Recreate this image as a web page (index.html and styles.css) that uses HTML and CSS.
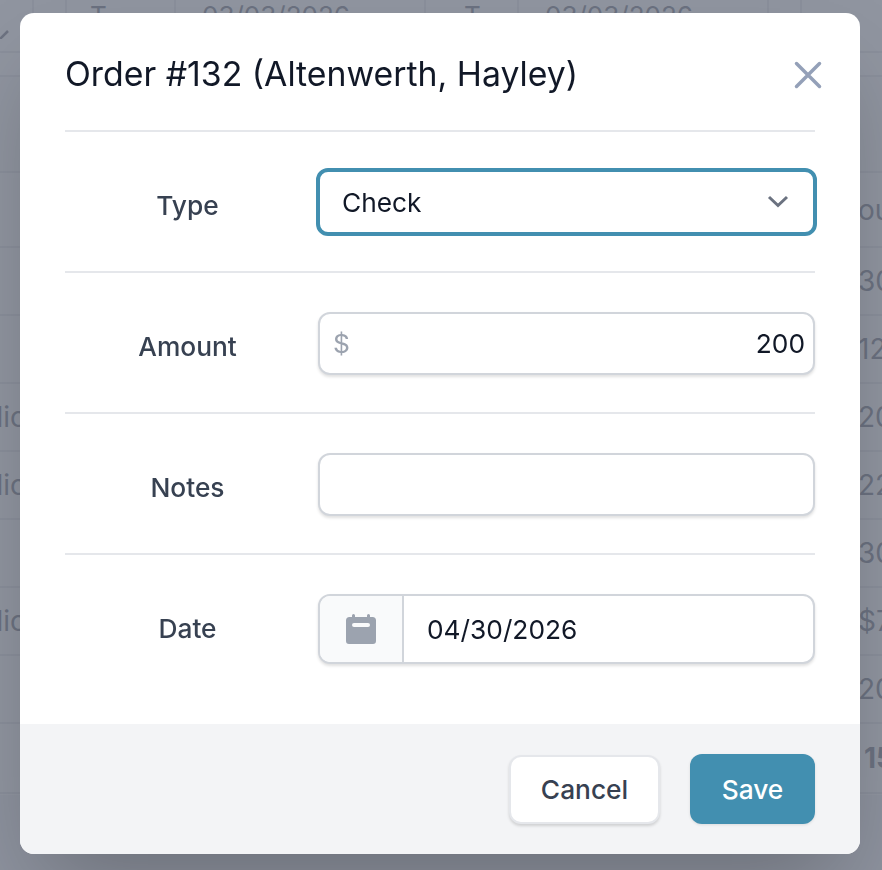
FILE: index.html
```html
<!DOCTYPE html>
<html lang="en">
<head>
  <meta charset="UTF-8" />
  <meta name="viewport" content="width=device-width, initial-scale=1.0" />
  <title>Order #132</title>
  <link rel="stylesheet" href="styles.css">
</head>
<body>
  <div class="page">
    <div class="filter-row">
      <span class="filter-cell filter-arrow">
        <svg width="12" height="12" viewBox="0 0 12 12"><path d="M0 12 L8 4" fill="none" stroke="#6f7280" stroke-width="2.5"/></svg>
      </span>
      <span class="filter-cell filter-gap"></span>
      <span class="filter-cell filter-type">T</span>
      <span class="filter-cell filter-date">03/03/2026</span>
      <span class="filter-cell filter-type-b">T</span>
      <span class="filter-cell filter-date">03/03/2026</span>
      <span class="filter-cell filter-gap"></span>
    </div>
    <div class="row row-gap"></div>
    <div class="row row-head"></div>
    <div class="row row-title"><span class="cell-left"></span><span class="cell-right">ou</span></div>
    <div class="row"><span class="cell-left"></span><span class="cell-right">30</span></div>
    <div class="row"><span class="cell-left"></span><span class="cell-right">12</span></div>
    <div class="row"><span class="cell-left">lic</span><span class="cell-right">20</span></div>
    <div class="row"><span class="cell-left">lic</span><span class="cell-right">22</span></div>
    <div class="row"><span class="cell-left"></span><span class="cell-right">30</span></div>
    <div class="row"><span class="cell-left">lic</span><span class="cell-right">$7</span></div>
    <div class="row"><span class="cell-left"></span><span class="cell-right">20</span></div>
    <div class="row row-total"><span class="cell-left"></span><span class="cell-right">15</span></div>
  </div>

  <div class="overlay"></div>

  <div class="modal">
    <div class="modal-header">
      <h1>Order #132 (Altenwerth, Hayley)</h1>
      <button class="close-btn" aria-label="Close">
        <svg width="28" height="28" viewBox="0 0 28 28"><path d="M2.5 2.500 L25.500 25.500 M25.500 2.500 L2.500 25.500" fill="none" stroke="currentColor" stroke-width="3.500" stroke-linecap="round"/></svg>
      </button>
    </div>

    <form class="modal-body">
      <div class="form-row">
        <label>Type</label>
        <div class="select-wrap">
          <select class="field-select">
            <option>Check</option>
          </select>
          <svg class="chevron" width="22" height="13" viewBox="0 0 22 13"><path d="M2 2 L11 10.500 L20 2" fill="none" stroke="currentColor" stroke-width="3"/></svg>
        </div>
      </div>
      <div class="form-row">
        <label>Amount</label>
        <div class="field">
          <span class="prefix">$</span>
          <input type="text" class="input-amount" value="200">
        </div>
      </div>
      <div class="form-row">
        <label>Notes</label>
        <div class="field">
          <input type="text">
        </div>
      </div>
      <div class="form-row">
        <label>Date</label>
        <div class="field field-date">
          <span class="addon">
            <svg width="32" height="32" viewBox="0 0 32 32"><path d="M7 2.500a1.500 1.500 0 0 1 3 0V4h12V2.500a1.500 1.500 0 0 1 3 0V4h2.500A3.500 3.500 0 0 1 31 7.500V28a3 3 0 0 1-3 3H4a3 3 0 0 1-3-3V7.500A3.500 3.500 0 0 1 4.500 4H7zM9 10a2 2 0 0 0 0 4h14a2 2 0 0 0 0-4z" fill="currentColor" fill-rule="evenodd"/></svg>
          </span>
          <input type="text" value="04/30/2026">
        </div>
      </div>
    </form>

    <div class="modal-footer">
      <button class="btn btn-cancel">Cancel</button>
      <button class="btn btn-save">Save</button>
    </div>
  </div>
</body>
</html>
```

FILE: styles.css
```css
* {
  box-sizing: border-box;
  margin: 0;
  padding: 0;
  font-family: Inter, 'Liberation Sans', sans-serif;
}

body {
  height: 870px;
  overflow: hidden;
  background: #f3f4f6;
}

.page {
  height: 795px;
  background: #fff;
  color: #6b7280;
  font-size: 28px;
}

.filter-row {
  display: flex;
  height: 53px;
  border-bottom: 2px solid #e5e7eb;
  background: #fff;
  font-size: 26px;
}

.filter-cell {
  border-right: 2px solid #e5e7eb;
  height: 100%;
}

.filter-arrow { width: 34px; padding-top: 14px; }
.filter-gap { width: 33px; }
.filter-type { width: 109px; padding-left: 23px; }
.filter-type-b { width: 93px; padding-left: 38px; }
.filter-date { width: 250px; padding-left: 26px; }

.row {
  display: flex;
  justify-content: space-between;
  align-items: center;
  height: 68px;
  border-bottom: 2px solid #e5e7eb;
}

.row-gap { height: 24px; }
.row-head { height: 96px; background: #f9fafb; }
.row-title { height: 75px; }
.row-total { height: 70px; font-weight: 700; }

.cell-left {
  width: 26px;
  display: flex;
  justify-content: flex-end;
  font-size: 28px;
}

.cell-right {
  width: 24px;
  white-space: nowrap;
  font-size: 28px;
}

.row-total .cell-right {
  width: 18px;
}

.overlay {
  position: fixed;
  inset: 0;
  background: rgba(107, 114, 128, 0.75);
}

.modal {
  position: absolute;
  left: 20px;
  top: 13px;
  width: 840px;
  height: 841px;
  background: #fff;
  border-radius: 14px;
  overflow: hidden;
  box-shadow: 0 44px 88px -21px rgba(0, 0, 0, 0.25);
  display: flex;
  flex-direction: column;
}

.modal-header {
  display: flex;
  justify-content: space-between;
  align-items: center;
  height: 119px;
  margin: 0 45px;
  border-bottom: 2px solid #e5e7eb;
}

h1 {
  font-size: 33.800px;
  font-weight: 400;
  color: #111827;
  line-height: 40px;
  margin-top: 4px;
}

.close-btn {
  border: none;
  background: none;
  color: #94a0b8;
  display: flex;
  margin: 6px -7px 0 0;
}

.modal-body {
  flex: 1;
  padding: 0 45px;
}

.form-row {
  display: flex;
  align-items: center;
  padding: 39px 0 37px;
  border-bottom: 2px solid #e5e7eb;
}

.form-row:last-child {
  border-bottom: none;
}

label {
  width: 245px;
  margin-right: 8px;
  text-align: center;
  font-size: 26.300px;
  font-weight: 500;
  color: #374151;
  padding-top: 5px;
}

.select-wrap {
  position: relative;
  flex: 1;
  margin: -3px -2px -2px;
}

.field-select {
  display: block;
  width: 100%;
  height: 68px;
  appearance: none;
  background: #fff;
  border: 4px solid #428fb0;
  border-radius: 12px;
  padding: 0 22px;
  font-size: 26.300px;
  color: #111827;
  outline: none;
}

.chevron {
  position: absolute;
  right: 28px;
  top: 27px;
  color: #6b7280;
}

.field {
  flex: 1;
  display: flex;
  align-items: center;
  height: 63px;
  background: #fff;
  border: 2px solid #d1d5db;
  border-radius: 12px;
  box-shadow: 0 2px 3px rgba(0, 0, 0, 0.12);
  overflow: hidden;
}

.field input {
  flex: 1;
  min-width: 0;
  height: 100%;
  border: none;
  outline: none;
  background: none;
  font-size: 26.300px;
  color: #111827;
  padding: 0 8px;
}

.prefix {
  padding-left: 13px;
  font-size: 26.300px;
  color: #9ca3af;
}

.input-amount {
  text-align: right;
}

.field-date {
  height: 70px;
  margin-bottom: -7px;
}

.field-date input {
  padding-left: 23px;
}

.addon {
  display: flex;
  align-items: center;
  justify-content: center;
  width: 84px;
  height: 100%;
  background: #f9fafb;
  border-right: 2px solid #d1d5db;
  color: #9ca3af;
}

.modal-footer {
  display: flex;
  justify-content: flex-end;
  align-items: center;
  gap: 30px;
  height: 130px;
  padding: 0 45px;
  background: #f3f4f6;
}

.btn {
  height: 70px;
  border-radius: 12px;
  font-size: 26.300px;
  font-weight: 500;
  cursor: pointer;
}

.btn-cancel {
  width: 151px;
  height: 69px;
  margin-top: 1px;
  background: #fff;
  color: #374151;
  border: 2px solid #e5e7eb;
  box-shadow: 0 2px 3px rgba(0, 0, 0, 0.15);
}

.btn-save {
  width: 125px;
  background: #428fb0;
  color: #fff;
  border: none;
  box-shadow: 0 1px 3px rgba(0, 0, 0, 0.1);
}
```
